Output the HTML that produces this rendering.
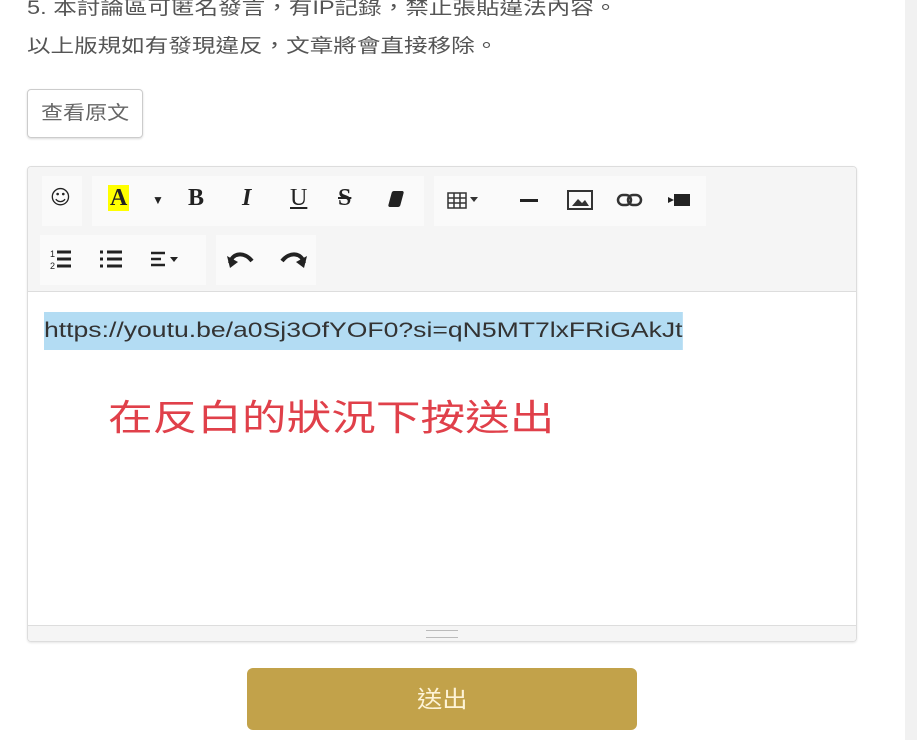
<!DOCTYPE html>
<html><head><meta charset="utf-8"><style>
body{margin:0;width:917px;height:740px;background:#fff;position:relative;overflow:hidden;font-family:"Liberation Sans","Noto Sans CJK TC",sans-serif;color:#444}
.sx{display:inline-block;transform:scaleX(1.24);transform-origin:left center;white-space:nowrap}
.t{position:absolute;left:27px;font-size:19px;color:#555}
.sb{position:absolute;left:905px;top:0;width:12px;height:740px;background:#f1f1f1}
.btn1{position:absolute;left:27px;top:89px;width:114px;height:47px;border:1px solid #ccc;border-radius:4px;box-shadow:0 1px 2px rgba(0,0,0,.15);font-size:19px;color:#666;line-height:47px}
.ed{position:absolute;left:27px;top:166px;width:828px;height:474px;border:1px solid #ddd;border-radius:4px;box-shadow:0 1px 2px rgba(0,0,0,.1);overflow:hidden}
.tb{position:absolute;left:0;top:0;right:0;height:124px;background:#f5f5f5;border-bottom:1px solid #ddd}
.g{position:absolute;background:#fafafa;height:50px}
.i{position:absolute;font-weight:bold;color:#222;font-size:24px;font-family:"Liberation Serif",serif}
.lk{position:absolute;left:16px;top:145px;font-size:21px;color:#333;line-height:38px}
.lk .sx{background:#b3dcf3;transform:scaleX(1.265)}
.red{position:absolute;left:80px;top:222px;font-size:36px;color:#e0404a}
.st{position:absolute;left:0;right:0;bottom:0;height:15px;background:#f5f5f5;border-top:1px solid #ddd}
.st div{position:absolute;left:398px;top:4px;width:32px;height:6px;border-top:1px solid #bbb;border-bottom:1px solid #bbb}
.send{position:absolute;left:247px;top:668px;width:390px;height:62px;background:#c2a24a;border-radius:6px;color:#fdf3d6;font-size:23px;line-height:62px}
</style></head><body>
<div class="t" style="top:-7px"><span class="sx">5. 本討論區可匿名發言，有IP記錄，禁止張貼違法內容。</span></div>
<div class="t" style="top:31px"><span class="sx">以上版規如有發現違反，文章將會直接移除。</span></div>
<div class="btn1"><span class="sx" style="margin-left:13px;transform:scaleX(1.16)">查看原文</span></div>
<div class="ed">
<div class="tb">
<div class="g" style="left:14px;top:9px;width:40px"></div>
<div class="g" style="left:64px;top:9px;width:332px"></div>
<div class="g" style="left:406px;top:9px;width:272px"></div>
<div class="g" style="left:12px;top:68px;width:166px"></div>
<div class="g" style="left:188px;top:68px;width:100px"></div>
<div class="i" style="left:22px;top:18px;font-weight:normal;font-family:'DejaVu Sans';font-size:20px">☺</div>
<div class="i" style="left:80px;top:18px;background:#ff0;line-height:26px;padding:0 2px">A</div>
<div class="i" style="left:124px;top:18px;font-size:12px;top:26px">▼</div>
<div class="i" style="left:160px;top:18px">B</div>
<div class="i" style="left:214px;top:18px;font-style:italic">I</div>
<div class="i" style="left:262px;top:18px;text-decoration:underline;font-weight:normal">U</div>
<div class="i" style="left:310px;top:18px;text-decoration:line-through">S</div>
<div class="i" style="left:362px;top:24px;width:12px;height:16px;background:#222;transform:skew(-15deg);border-radius:2px"></div>
<svg style="position:absolute;left:418px;top:24px" width="40" height="20"><g stroke="#333" stroke-width="1.5" fill="none"><rect x="2" y="2" width="18" height="15"/><path d="M2 7h18M2 12h18M8 2v15M14 2v15"/></g><path d="M24 6h8l-4 5z" fill="#333"/></svg>
<div class="i" style="left:492px;top:32px;width:18px;height:3px;background:#222"></div>
<svg style="position:absolute;left:538px;top:22px" width="28" height="22"><rect x="2" y="2" width="24" height="18" fill="none" stroke="#333" stroke-width="2"/><path d="M6 17l6-7 4 4 3-3 4 6z" fill="#333"/></svg>
<svg style="position:absolute;left:588px;top:24px" width="28" height="18"><g stroke="#333" stroke-width="2.5" fill="none"><rect x="2" y="4" width="13" height="10" rx="5"/><rect x="12" y="4" width="13" height="10" rx="5"/></g></svg>
<svg style="position:absolute;left:638px;top:24px" width="28" height="18"><path d="M2 6l6 3-6 3z" fill="#222"/><rect x="8" y="3" width="16" height="12" fill="#222"/></svg>
<svg style="position:absolute;left:22px;top:80px" width="24" height="26"><text x="0" y="10" font-size="9" fill="#222">1</text><text x="0" y="22" font-size="9" fill="#222">2</text><g stroke="#222" stroke-width="3"><path d="M7 5h14M7 12h14M7 19h14"/></g></svg>
<svg style="position:absolute;left:70px;top:80px" width="26" height="26"><g stroke="#222" stroke-width="3"><path d="M2 5h3M2 12h3M2 19h3M9 5h15M9 12h15M9 19h15"/></g></svg>
<svg style="position:absolute;left:122px;top:82px" width="34" height="22"><g stroke="#222" stroke-width="2.5"><path d="M1 4h14M1 10h10M1 16h14"/></g><path d="M20 8h8l-4 5z" fill="#222"/></svg>
<svg style="position:absolute;left:198px;top:80px" width="32" height="24"><path d="M4 16 C6 6 18 4 26 14" stroke="#222" stroke-width="4" fill="none"/><path d="M1 9l3 12 8-6z" fill="#222"/></svg>
<svg style="position:absolute;left:248px;top:80px" width="32" height="24"><path d="M28 16 C26 6 14 4 6 14" stroke="#222" stroke-width="4" fill="none"/><path d="M31 9l-3 12-8-6z" fill="#222"/></svg>
</div>
<div class="lk"><span class="sx">https://youtu.be/a0Sj3OfYOF0?si=qN5MT7lxFRiGAkJt</span></div>
<div class="red"><span class="sx">在反白的狀況下按送出</span></div>
<div class="st"><div></div></div>
</div>
<div class="send"><span class="sx" style="margin-left:170px;transform:scaleX(1.1)">送出</span></div>
<div class="sb"></div>
</body></html>
